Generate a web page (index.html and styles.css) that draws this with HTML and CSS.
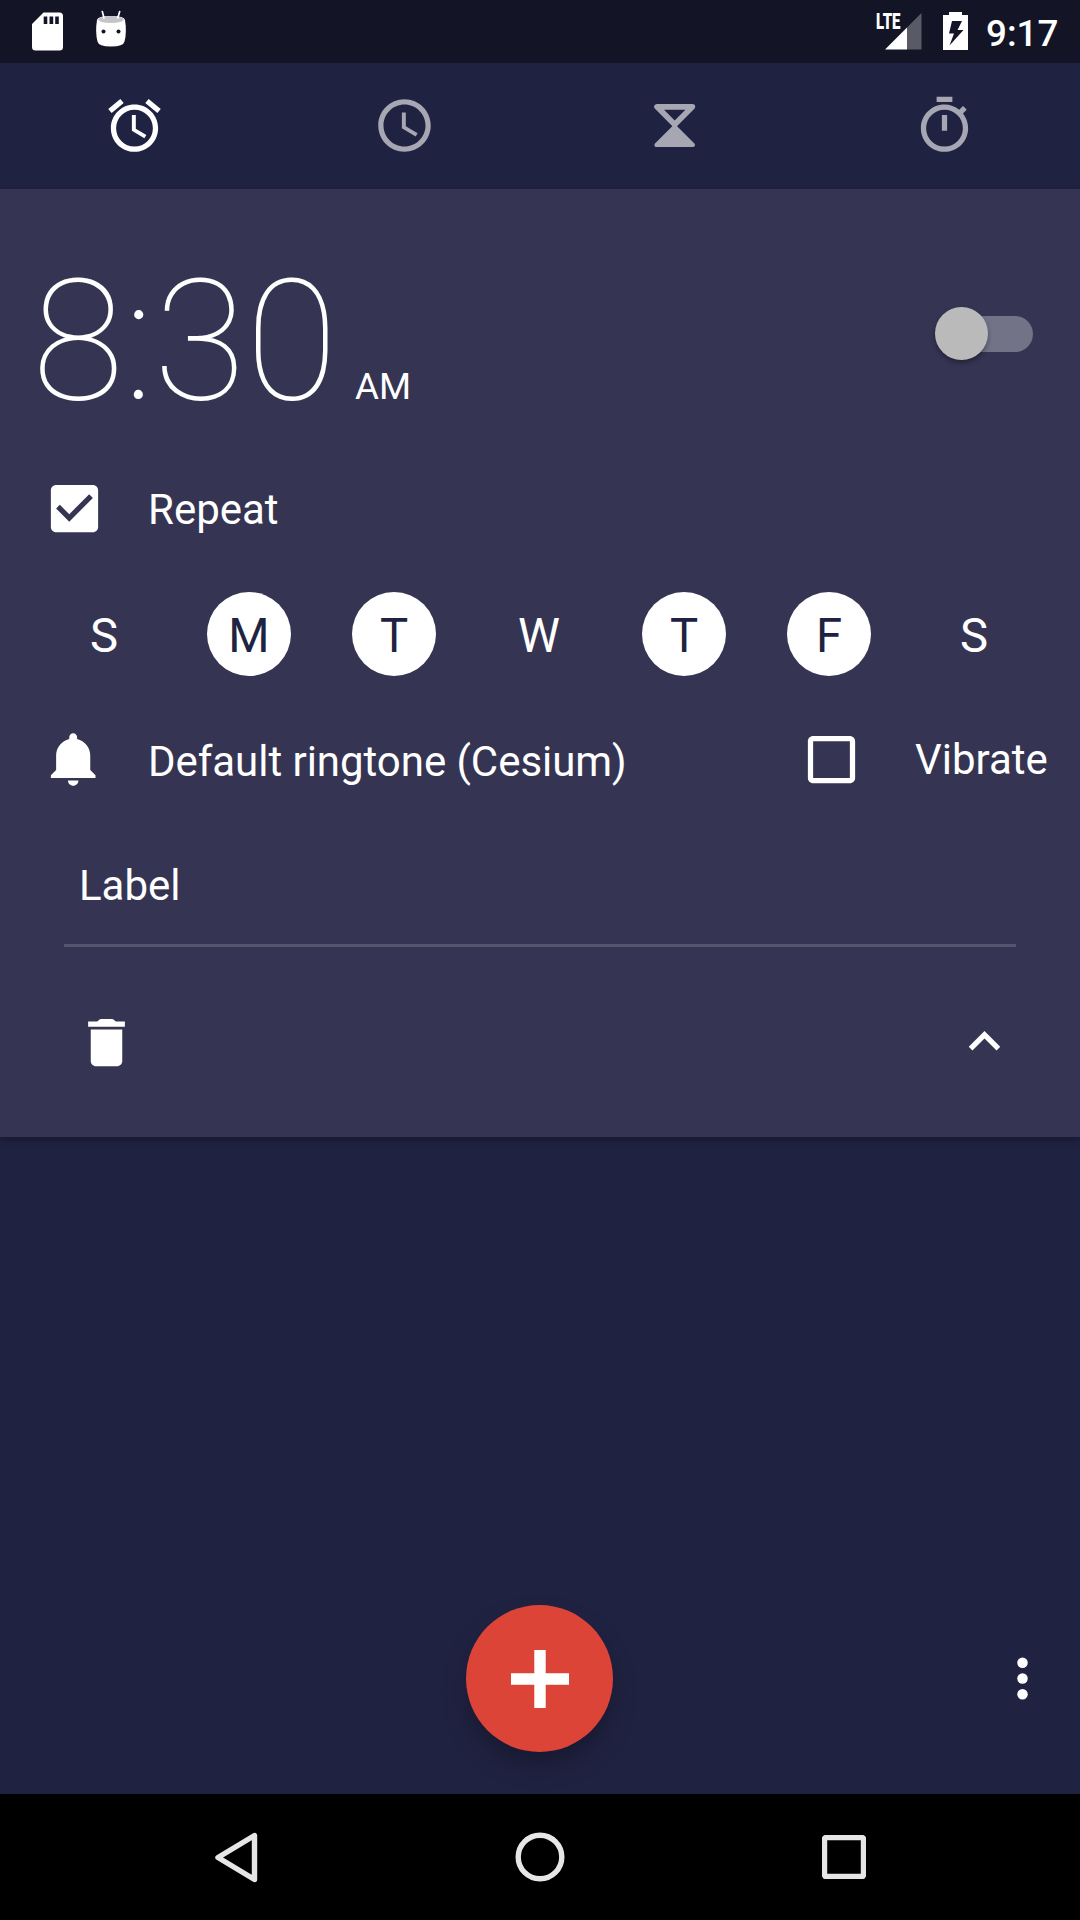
FILE: index.html
```html
<!DOCTYPE html>
<html lang="en">
<head>
<meta charset="utf-8">
<title>Clock</title>
<link rel="stylesheet" href="styles.css">
</head>
<body>
<div class="app">
  <header class="status">
    <svg class="sd" width="31" height="39" viewBox="0 0 31 39"><path fill="#fff" fill-rule="evenodd" d="M11.5 0.5H27.5Q31 0.500 31 4V35Q31 38.500 27.500 38.500H3.500Q0 38.500 0 35V12ZM11.700 4.500V12H15.300V4.500ZM17.500 4.500V12H21.200V4.500ZM23.200 4.500V12H26.800V4.500Z"/></svg>
    <svg class="droid" width="32" height="37" viewBox="0 0 32 37">
      <path fill="#fff" d="M2 10Q2.500 6 16 6T30 10Q32 22 29.500 31.500Q28.500 36.500 16 36.500Q3.500 36.500 2.500 31.500Q0 22 2 10Z"/>
      <ellipse cx="16" cy="9.500" rx="12.800" ry="3.500" fill="#c3c3c8"/>
      <path stroke="#fff" stroke-width="1.700" stroke-linecap="round" d="M7.300 1.500L9 8M24.700 1.500L22.800 8"/>
      <circle cx="8.500" cy="21.400" r="2" fill="#131426"/><circle cx="23.500" cy="21.400" r="2" fill="#131426"/>
    </svg>
    <span class="grow"></span>
    <svg class="signal" width="46" height="38" viewBox="0 0 46 38">
      <path fill="#fff" fill-opacity=".3" d="M31 15.500L45.500 1V37.500H31Z"/>
      <path fill="#fff" d="M9 37.500L31 15.500V37.500Z"/>
      <text class="lte" x="0" y="17" textLength="24.500" lengthAdjust="spacingAndGlyphs">LTE</text>
    </svg>
    <svg class="battery" width="25" height="38" viewBox="0 0 25 38"><path fill="#fff" fill-rule="evenodd" d="M6 0H19V3H25V38H0V3H6ZM9 9L6 21.500H11L6.500 33.500L20.500 18H14.500L19 9Z"/></svg>
    <span class="clock">9:17</span>
  </header>

  <nav class="tabs">
    <a class="tab active"><svg class="icon" viewBox="0 0 24 24"><path d="M22 5.720l-4.600-3.860-1.290 1.530 4.600 3.860L22 5.720zM7.880 3.390L6.600 1.860 2 5.710l1.290 1.530 4.590-3.850zM12.500 8H11v6l4.750 2.850.75-1.230-4-2.370V8zM12 4c-4.970 0-9 4.030-9 9s4.020 9 9 9c4.970 0 9-4.030 9-9s-4.030-9-9-9zm0 16c-3.870 0-7-3.130-7-7s3.130-7 7-7 7 3.130 7 7-3.130 7-7 7z"/></svg></a>
    <a class="tab"><svg class="icon" viewBox="0 0 24 24"><path d="M11.990 2C6.470 2 2 6.480 2 12s4.470 10 9.990 10C17.520 22 22 17.520 22 12S17.520 2 11.990 2zM12 20c-4.420 0-8-3.580-8-8s3.580-8 8-8 8 3.580 8 8-3.580 8-8 8zM12.500 7H11v6l5.250 3.150.75-1.230-4.500-2.670z"/></svg></a>
    <a class="tab"><svg class="icon" viewBox="0 0 63 63"><g transform="translate(11.200 10)" stroke="currentColor" stroke-linejoin="round"><path fill="none" stroke-width="5.700" d="M2.850 2.850H38.150L20.500 20.500Z"/><path stroke-width="4" d="M2.200 41H38.800L20.500 22.700Z"/></g></svg></a>
    <a class="tab"><svg class="icon" viewBox="0 0 24 24"><path d="M15 1H9v2h6V1zm-4 13h2V8h-2v6zm8.030-6.610l1.420-1.420c-.43-.51-.9-.99-1.410-1.410l-1.420 1.420C16.070 4.740 14.120 4 12 4c-4.970 0-9 4.030-9 9s4.020 9 9 9 9-4.030 9-9c0-2.120-.74-4.070-1.970-5.610zM12 20c-3.870 0-7-3.130-7-7s3.130-7 7-7 7 3.130 7 7-3.130 7-7 7z"/></svg></a>
  </nav>

  <main class="card">
    <section class="time-row">
      <div class="time">8:30</div>
      <div class="ampm">AM</div>
      <div class="switch"><div class="thumb"></div></div>
    </section>
    <section class="option repeat">
      <svg class="icon" viewBox="0 0 24 24"><path d="M19 3H5c-1.110 0-2 .9-2 2v14c0 1.100.89 2 2 2h14c1.110 0 2-.9 2-2V5c0-1.100-.89-2-2-2zm-9 14l-5-5 1.410-1.410L10 14.170l7.590-7.590L19 8l-9 9z"/></svg>
      <span>Repeat</span>
    </section>
    <section class="days">
      <span class="day">S</span>
      <span class="day on">M</span>
      <span class="day on">T</span>
      <span class="day">W</span>
      <span class="day on">T</span>
      <span class="day on">F</span>
      <span class="day">S</span>
    </section>
    <section class="option ringtone">
      <svg class="icon" viewBox="0 0 24 24"><path d="M11.500 22c1.100 0 2-.9 2-2h-4c0 1.100.9 2 2 2zm6.500-6v-5.500c0-3.070-2.130-5.640-5-6.320V3.500c0-.83-.67-1.500-1.500-1.500S10 2.670 10 3.500v.68c-2.870.68-5 3.250-5 6.320V16l-2 2v1h17v-1l-2-2z"/></svg>
      <span class="ringtone-name">Default ringtone (Cesium)</span>
      <svg class="icon vibrate-box" viewBox="0 0 24 24"><path d="M19 5v14H5V5h14m0-2H5c-1.100 0-2 .9-2 2v14c0 1.100.9 2 2 2h14c1.100 0 2-.9 2-2V5c0-1.100-.9-2-2-2z"/></svg>
      <span class="vibrate">Vibrate</span>
    </section>
    <section class="label">Label</section>
    <section class="actions">
      <svg class="icon" viewBox="0 0 24 24"><path d="M6 19c0 1.100.9 2 2 2h8c1.100 0 2-.9 2-2V7H6v12zM19 4h-3.500l-.7-.7Q14.500 3 14 3h-4q-.5 0-.8.3L8.500 4H5v2h14V4z"/></svg>
      <svg class="icon" viewBox="0 0 24 24"><path d="M12 8l-6 6 1.410 1.410L12 10.830l4.590 4.580L18 14z"/></svg>
    </section>
  </main>

  <footer class="bottom">
    <span></span>
    <button class="fab" aria-label="Add alarm"><svg width="58" height="58" viewBox="0 0 59 59"><path fill="#fff" d="M23.700 0H35.300V23.700H59V35.300H35.300V59H23.700V35.300H0V23.700H23.700Z"/></svg></button>
    <svg class="icon more" viewBox="0 0 24 24"><circle cx="12" cy="6" r="2"/><circle cx="12" cy="12" r="2"/><circle cx="12" cy="18" r="2"/></svg>
  </footer>

  <div class="navbar">
    <svg width="43" height="51" viewBox="0 0 43 51"><path d="M39.500 3.500V47.500L3 25.500Z"/></svg>
    <svg width="50" height="50" viewBox="0 0 50 50"><circle cx="25" cy="25" r="21.800"/></svg>
    <svg width="44" height="44" viewBox="0 0 44 44"><rect x="2.500" y="2.500" width="39" height="39" rx="1.500"/></svg>
  </div>
</div>
</body>
</html>
```

FILE: styles.css
```css
* { box-sizing: border-box; }

body {
  margin: 0;
  background: #202242;
  color: #fff;
  font-family: Roboto, "Noto Sans", sans-serif;
}

svg { display: block; flex: none; }

.app {
  width: 1080px;
  height: 1920px;
  display: flex;
  flex-direction: column;
  overflow: hidden;
}

.icon {
  width: 63px;
  height: 63px;
  fill: currentColor;
}

/* Status bar */
.status {
  height: 63px;
  display: flex;
  padding: 12px 21px 0 32px;
  background: #131426;
}
.droid { margin: -2px 0 0 31.5px; }
.grow { flex: 1; }
.signal { overflow: visible; }
.battery { margin-left: 21px; }
.lte { font-size: 22.5px; font-weight: 900; fill: #fff; }
.clock {
  margin-left: 18px;
  width: 73px;
  font-size: 36.75px;
  font-weight: 500;
  line-height: 43px;
}

/* Tabs */
.tabs {
  height: 126px;
  display: grid;
  grid-template-columns: repeat(4, 270px);
}
.tab { padding: 31px 0 0 103px; color: #a6a7b3; }
.tab.active { color: #fff; }

/* Alarm card */
.card {
  height: 948px;
  display: flex;
  flex-direction: column;
  background: #353553;
  box-shadow: 0 3px 8px rgba(0, 0, 0, .3);
}
.time-row {
  height: 264px;
  display: flex;
  align-items: baseline;
  padding: 55px 47px 0 32px;
}
.time {
  width: 317px;
  font-size: 168px;
  font-weight: 100;
  line-height: 196px;
}
.ampm { flex: 1; margin-left: 6px; font-size: 36.75px; }
.switch {
  width: 90px;
  height: 36px;
  align-self: flex-start;
  display: flex;
  align-items: center;
  margin-top: 72px;
  border-radius: 18px;
  background: #727387;
}
.thumb {
  width: 53px;
  height: 53px;
  flex: none;
  margin: -1px 0 0 -8px;
  border-radius: 50%;
  background: #bababa;
  box-shadow: 0 3px 5px rgba(0, 0, 0, .35);
}
.option {
  display: flex;
  align-items: center;
  padding-left: 42px;
  font-size: 42px;
  line-height: 50px;
}
.repeat { height: 110px; padding-left: 42.5px; }
.repeat span { margin-left: 42.5px; padding-top: 4px; }
.days {
  height: 142px;
  display: grid;
  grid-template-columns: repeat(7, 84px);
  justify-content: space-between;
  align-content: center;
  padding: 0 64px 0 62px;
}
.day {
  height: 84px;
  border-radius: 50%;
  font-size: 47.25px;
  line-height: 88px;
  text-align: center;
}
.day.on { background: #fff; color: #202242; }
.ringtone { height: 108px; padding: 0 32px 0 43px; }
.ringtone-name { margin-left: 42px; padding-top: 5px; letter-spacing: -.04px; }
.vibrate-box { margin-left: auto; }
.vibrate { width: 133px; margin-left: 52px; padding-top: 1px; }
.label {
  height: 134px;
  margin: 0 64px;
  padding: 48px 15px 0;
  border-bottom: 3px solid #54546d;
  font-size: 42px;
  line-height: 50px;
}
.actions {
  display: flex;
  justify-content: space-between;
  padding: 63px 64px 0 75px;
}
.actions .icon:first-child { margin-top: 1px; }

/* Floating controls */
.bottom {
  flex: 1;
  display: grid;
  grid-template-columns: 466px 147px 1fr;
  align-items: end;
  padding-bottom: 42px;
}
.fab {
  width: 147px;
  height: 147px;
  display: flex;
  align-items: center;
  justify-content: center;
  padding: 0;
  border: 0;
  border-radius: 50%;
  background: #db4437;
  box-shadow: 0 14px 24px rgba(0, 0, 0, .25);
}
.more { justify-self: end; margin: 0 26px 42px 0; }

/* System navigation */
.navbar {
  height: 126px;
  display: flex;
  align-items: center;
  justify-content: space-between;
  padding: 0 214px 0 215px;
  background: #000;
}
.navbar svg {
  fill: none;
  stroke: #e6e6e6;
  stroke-width: 5.4;
  stroke-linejoin: round;
}
```
